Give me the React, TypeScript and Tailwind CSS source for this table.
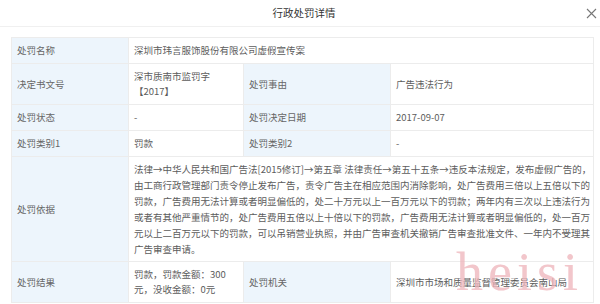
import React from "react";

const Label = ({ children }: { children: React.ReactNode }) => (
  <td className="border border-[#ececec] bg-[#edf5fc] px-[5px] py-[5px] align-middle text-[#666]">
    {children}
  </td>
);

const Val = ({ children, colSpan }: { children: React.ReactNode; colSpan?: number }) => (
  <td colSpan={colSpan} className="border border-[#ececec] bg-white px-[5px] py-[5px] align-middle text-[#5c5c5c]">
    {children}
  </td>
);

const basisLines = [
  "法律→中华人民共和国广告法[2015修订]→第五章 法律责任→第五十五条→违反本法规定，发布虚假广告的，",
  "由工商行政管理部门责令停止发布广告，责令广告主在相应范围内消除影响，处广告费用三倍以上五倍以下的",
  "罚款，广告费用无法计算或者明显偏低的，处二十万元以上一百万元以下的罚款；两年内有三次以上违法行为",
  "或者有其他严重情节的，处广告费用五倍以上十倍以下的罚款，广告费用无法计算或者明显偏低的，处一百万",
  "元以上二百万元以下的罚款，可以吊销营业执照，并由广告审查机关撤销广告审查批准文件、一年内不受理其",
  "广告审查申请。",
];

export default function App() {
  return (
    <div className="relative h-[304px] w-[600px] overflow-hidden bg-white font-['Noto_Sans_CJK_SC','Noto_Sans',sans-serif]">
      <div className="grid h-[27px] grid-cols-[1fr_auto_1fr] items-center border-b border-[#f0f0f0]">
        <div />
        <div className="pl-[8px] text-[10.5px] text-[#333]">行政处罚详情</div>
        <div className="flex justify-end pr-[3px]">
          <svg width="11" height="11" viewBox="0 0 11 11" className="mt-[1px]">
            <path d="M1 1 L10 10 M10 1 L1 10" stroke="#777" strokeWidth="1.1" fill="none" />
          </svg>
        </div>
      </div>

      <div className="ml-[11px] mt-[10px]">
        <table className="w-[582px] table-fixed border-collapse text-[9.5px] leading-[15px]">
          <colgroup>
            <col className="w-[117px]" />
            <col className="w-[115px]" />
            <col className="w-[147px]" />
            <col className="w-[203px]" />
          </colgroup>
          <tbody>
            <tr>
              <Label>处罚名称</Label>
              <Val colSpan={3}>深圳市玮言服饰股份有限公司虚假宣传案</Val>
            </tr>
            <tr>
              <Label>决定书文号</Label>
              <Val>深市质南市监罚字【2017】</Val>
              <Label>处罚事由</Label>
              <Val>广告违法行为</Val>
            </tr>
            <tr>
              <Label>处罚状态</Label>
              <Val>-</Val>
              <Label>处罚决定日期</Label>
              <Val>2017-09-07</Val>
            </tr>
            <tr>
              <Label>处罚类别1</Label>
              <Val>罚款</Val>
              <Label>处罚类别2</Label>
              <Val>-</Val>
            </tr>
            <tr>
              <Label>处罚依据</Label>
              <td colSpan={3} className="border border-[#ececec] bg-white px-[5px] py-[4px] align-middle leading-[16px] text-[#5c5c5c]">
                {basisLines.map((l, i) => (
                  <div key={i} className="whitespace-nowrap">
                    {l}
                  </div>
                ))}
              </td>
            </tr>
            <tr>
              <Label>处罚结果</Label>
              <Val>罚款，罚款金额：300元，没收金额：0元</Val>
              <Label>处罚机关</Label>
              <Val>深圳市市场和质量监督管理委员会南山局</Val>
            </tr>
          </tbody>
        </table>
      </div>

      <div className="pointer-events-none absolute left-[456px] top-[245px] font-['Liberation_Serif',serif] text-[54px] leading-none tracking-[5px] text-[#eeb4ba] opacity-75">
        heisi
      </div>
    </div>
  );
}
